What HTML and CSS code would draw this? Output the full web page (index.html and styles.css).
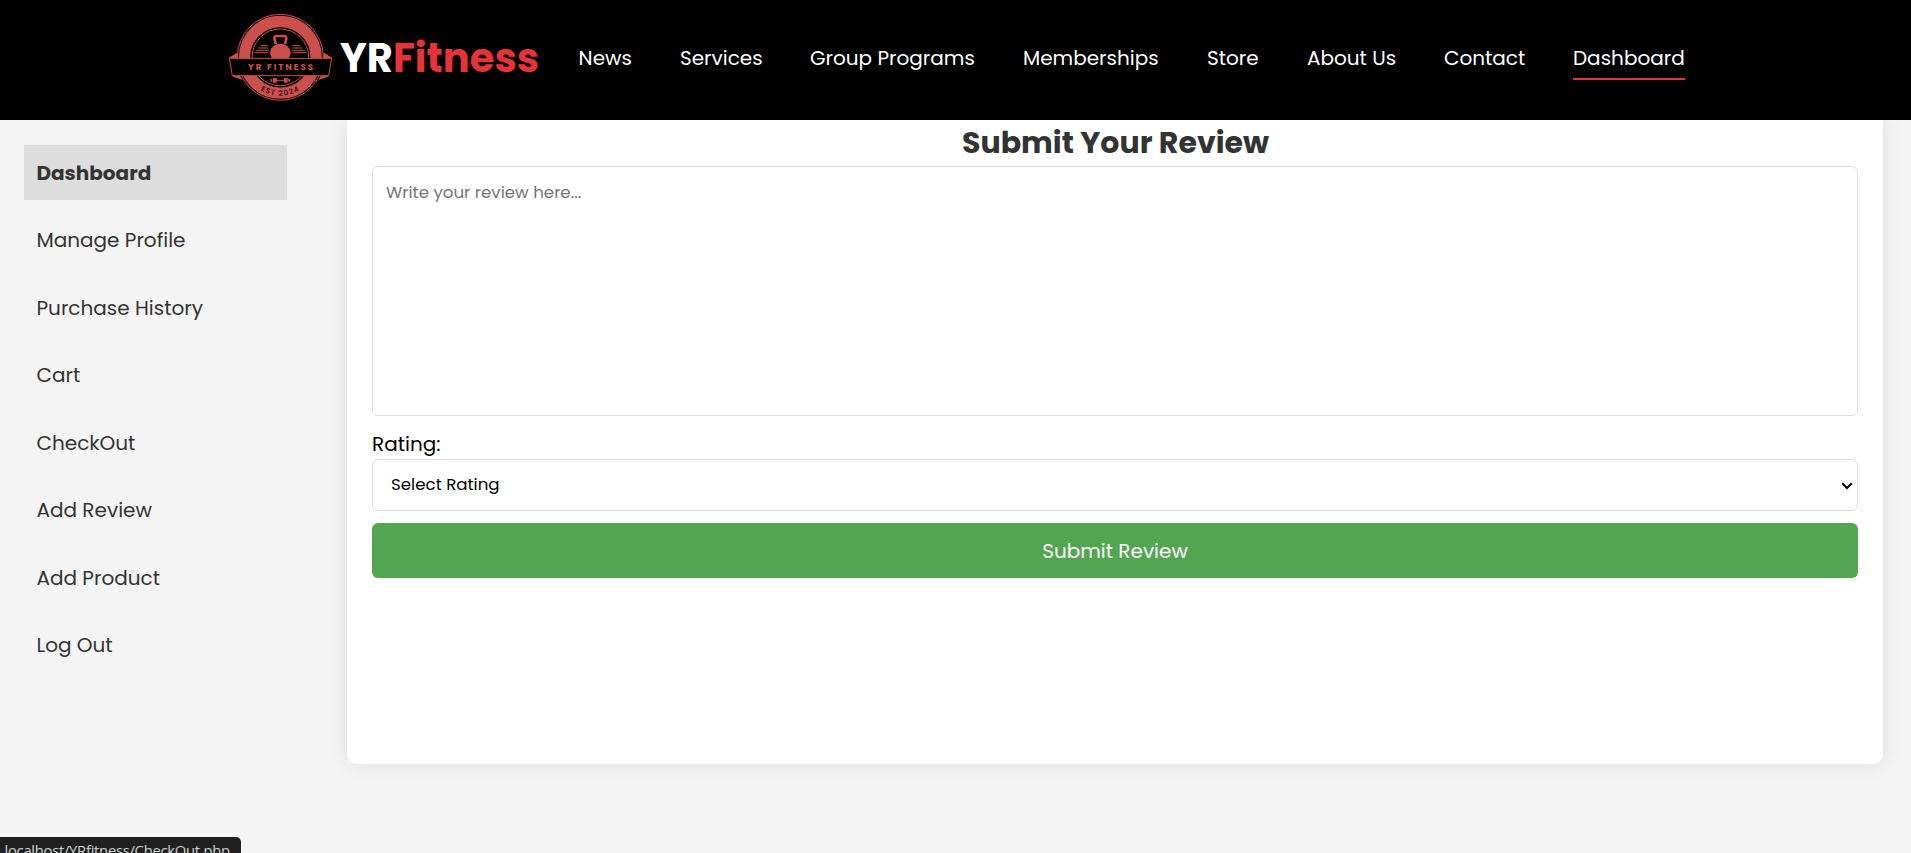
FILE: index.html
```
<!DOCTYPE html>
<html lang="en">
<head>
<meta charset="utf-8">
<title>YRFitness - Submit Your Review</title>
<link rel="stylesheet" href="styles.css">
</head>
<body>
<header class="header">
  <a class="brand" href="#">
    <svg class="logo" viewBox="0 0 360 360" role="img" aria-label="YR Fitness logo">
      <circle cx="181" cy="172" r="129" fill="none" stroke="#cd4f4d" stroke-width="3"/>
      <circle cx="181" cy="172" r="107.500" fill="none" stroke="#cd4f4d" stroke-width="34"/>
      <circle cx="181" cy="172" r="85" fill="none" stroke="#cd4f4d" stroke-width="3"/>
      <path d="M28 174L51 160V174ZM335 174L312 160V174ZM38 228L66 238L59 228ZM325 228L297 238L304 228Z" fill="#cd4f4d" stroke="#cd4f4d" stroke-width="3"/>
      <path d="M122 137H145M115 144H144M108 151H147M103 158H144M217 137H240M218 144H247M215 151H254M218 158H259" stroke="#cd4f4d" stroke-width="3"/>
      <path d="M167 132L163 115Q162 108 170 108H192Q200 108 199 115L195 132" fill="none" stroke="#cd4f4d" stroke-width="8"/>
      <path d="M156 175Q145 158 154 145Q163 131 181 131Q199 131 208 145Q217 158 206 175Z" fill="#cd4f4d"/>
      <path d="M28 175H335L326 227H37Z" fill="#000" stroke="#cd4f4d" stroke-width="3"/>
      <path d="M165 241H198" stroke="#cd4f4d" stroke-width="3"/>
      <path d="M152 237h5v8h-5zM159 234h11v14h-11zM192 234h11v14h-11zM205 237h5v8h-5z" fill="#cd4f4d"/>
      <path id="arc" d="M66 172A115 115 0 0 0 296 172" fill="none"/>
      <text class="logo-name" x="84" y="210" textLength="195">YR FITNESS</text>
      <text class="logo-year"><textPath href="#arc" startOffset="50%" text-anchor="middle">EST 2024</textPath></text>
    </svg>
    <span class="brand-name">YR<span class="brand-fit">Fitness</span></span>
  </a>
  <nav class="nav">
    <a href="#">News</a>
    <a href="#">Services</a>
    <a href="#">Group Programs</a>
    <a href="#">Memberships</a>
    <a href="#">Store</a>
    <a href="#">About Us</a>
    <a href="#">Contact</a>
    <a class="active" href="#">Dashboard</a>
  </nav>
</header>
<main class="layout">
  <aside class="sidebar">
    <a class="current" href="#">Dashboard</a>
    <a href="#">Manage Profile</a>
    <a href="#">Purchase History</a>
    <a href="#">Cart</a>
    <a href="#">CheckOut</a>
    <a href="#">Add Review</a>
    <a href="#">Add Product</a>
    <a href="#">Log Out</a>
  </aside>
  <section class="card">
    <h2>Submit Your Review</h2>
    <form class="form">
      <textarea placeholder="Write your review here..."></textarea>
      <label for="rating">Rating:</label>
      <div class="select-wrap">
        <select id="rating"><option>Select Rating</option></select>
        <svg class="chevron" viewBox="0 0 12 8"><path d="M1.2 1.2L6 6L10.8 1.2" fill="none" stroke="#000" stroke-width="2"/></svg>
      </div>
      <button type="button">Submit Review</button>
    </form>
  </section>
</main>
<div class="status">localhost/YRfitness/CheckOut.php</div>
</body>
</html>
```
FILE: styles.css
```
* { margin: 0; padding: 0; box-sizing: border-box; }
html, body { height: 853px; overflow: hidden; }
body {
  display: flex;
  flex-direction: column;
  background: #f4f4f4;
  font-family: Poppins, Inter, "Open Sans", sans-serif;
  font-size: 20px;
  color: #333;
}
a { color: inherit; text-decoration: none; white-space: nowrap; }

.header {
  display: flex;
  flex: none;
  height: 120px;
  padding-left: 220px;
  background: #000;
  color: #fff;
  position: relative;
  z-index: 1;
}
.brand { display: flex; width: 358px; }
.logo { flex: none; width: 120px; height: 120px; }
.logo-name { font: 700 26px Poppins, Inter, sans-serif; fill: #cd4f4d; }
.logo-year { font: 500 22px Poppins, Inter, sans-serif; fill: #160404; letter-spacing: 3.5px; }
.brand-name { font-size: 40px; font-weight: 700; line-height: 48px; padding-top: 34px; }
.brand-fit { color: #e63238; }
.nav {
  display: grid;
  grid-template-columns: 53.4px 82px 165px 136px 52px 89px 81px 112px;
  column-gap: 48px;
  align-items: start;
  padding: 36px 0 0 .6px;
}
.nav a { height: 44px; line-height: 44px; }
.nav .active { border-bottom: 2px solid #e63238; }

.layout { display: flex; flex: none; }
.sidebar {
  display: flex;
  flex-direction: column;
  gap: 12.49px;
  width: 347px;
  padding: 25px 60px 0 24px;
}
.sidebar a { height: 55px; line-height: 56px; padding-left: 12.5px; }
.sidebar .current { background: #ddd; font-weight: 700; }

.card {
  width: 1536px;
  height: 644px;
  padding: 0 25px;
  background: #fff;
  border-radius: 0 0 10px 10px;
  box-shadow: 0 0 20px rgba(0, 0, 0, .1);
}
h2 { height: 46px; line-height: 45px; text-align: center; font-size: 30px; padding-left: 1px; }
.form { display: flex; flex-direction: column; }
textarea, select {
  width: 100%;
  border: 1px solid #ddd;
  border-radius: 6px;
  background: #fff;
  font-family: inherit;
  font-size: 16.66px;
  color: #000;
}
textarea { height: 250px; padding: 13px 13px; line-height: 25px; resize: none; }
textarea::placeholder { color: #757575; }
label { height: 43px; padding-top: 13px; line-height: 30px; color: #000; }
.select-wrap { position: relative; height: 52px; }
select { height: 52px; padding: 0 18px 2px; appearance: none; }
.chevron { position: absolute; right: 5px; top: 23px; width: 12px; height: 8px; }
button {
  height: 55px;
  margin-top: 12px;
  border: 0;
  border-radius: 6px;
  background: #54a551;
  color: #fff;
  font-family: inherit;
  font-size: 20px;
}
.status {
  position: absolute;
  left: 0;
  bottom: 0;
  width: 241px;
  height: 16px;
  padding-left: 4.5px;
  overflow: hidden;
  background: #1f2120;
  border-top-right-radius: 5px;
  color: #cfd1d1;
  font: 14.8px/26px "Open Sans", sans-serif;
  letter-spacing: -.28px;
  white-space: nowrap;
}
```
